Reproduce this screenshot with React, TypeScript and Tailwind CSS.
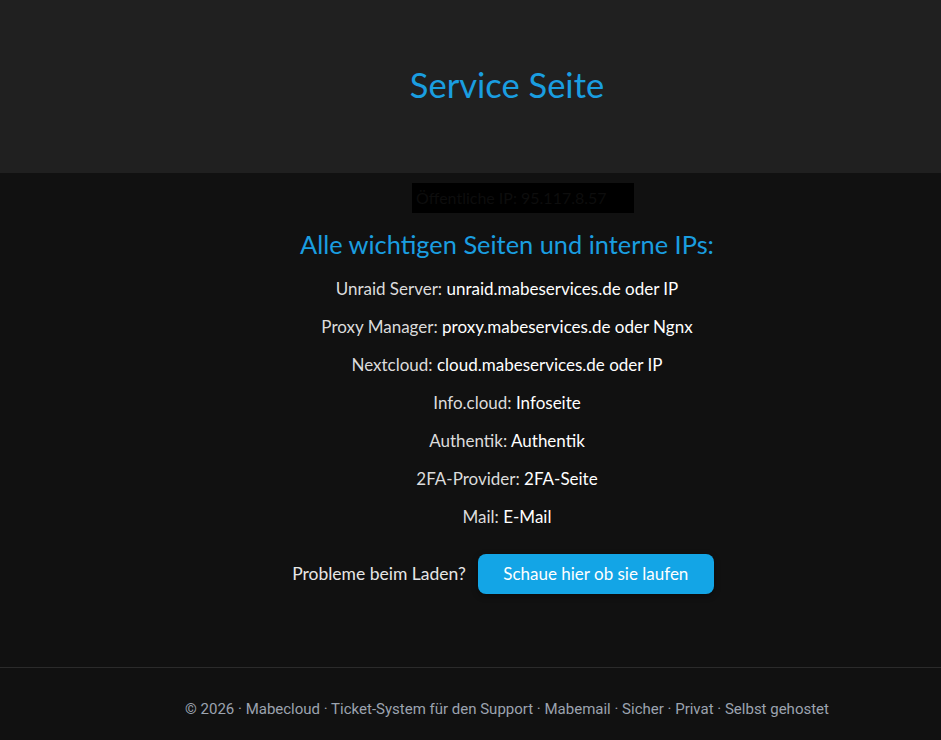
import React from "react";

const rows: [string, string][] = [
  ["Unraid Server:", "unraid.mabeservices.de oder IP"],
  ["Proxy Manager:", "proxy.mabeservices.de oder Ngnx"],
  ["Nextcloud:", "cloud.mabeservices.de oder IP"],
  ["Info.cloud:", "Infoseite"],
  ["Authentik:", "Authentik"],
  ["2FA-Provider:", "2FA-Seite"],
  ["Mail:", "E-Mail"],
];

export default function App() {
  return (
    <div className="min-h-[740px] bg-[#111111] flex flex-col" style={{ fontFamily: "Lato, 'Noto Sans', sans-serif" }}>
      <header className="h-[173px] bg-[#202020] flex items-center justify-center pl-[73px]">
        <h1 className="text-[34.5px] leading-[40px] text-[#1a9ee0] pb-[4px]">Service Seite</h1>
      </header>
      <main className="flex flex-col items-center pl-[73px]">
        <div className="mt-[10px] ml-[32px] w-[222px] h-[30px] bg-black text-[#0d0d0d] text-[16px] flex items-center pl-[4px]">
          Öffentliche IP: 95.117.8.57
        </div>
        <h2 className="mt-[16px] text-[25.4px] text-[#1a9ee0] leading-[30px]">Alle wichtigen Seiten und interne IPs:</h2>
        <div className="mt-[18px] flex flex-col items-center gap-[14px]">
          {rows.map(([l, v]) => (
            <div key={l} className="text-[17px] leading-[24px] text-[#dcdcdc]">
              {l} <span className="text-white">{v}</span>
            </div>
          ))}
        </div>
        <div className="mt-[25px] mr-[8px] flex items-center gap-[12px]">
          <span className="text-[17.5px] text-[#e6e6e6]">Probleme beim Laden?</span>
          <button className="h-[40px] px-[25.5px] rounded-[8px] bg-[#13a5e6] text-white text-[17px] shadow-[0_2px_6px_rgba(0,0,0,0.4)]">
            Schaue hier ob sie laufen
          </button>
        </div>
      </main>
      <footer className="mt-[73px] border-t border-[#2b2b2b] h-[83px] flex items-center justify-center pl-[73px]">
        <p className="text-[15px] text-[#9ca3af]" style={{ fontFamily: "Roboto, sans-serif" }}>
          © 2026 · Mabecloud · Ticket-System für den Support · Mabemail · Sicher · Privat · Selbst gehostet
        </p>
      </footer>
    </div>
  );
}
